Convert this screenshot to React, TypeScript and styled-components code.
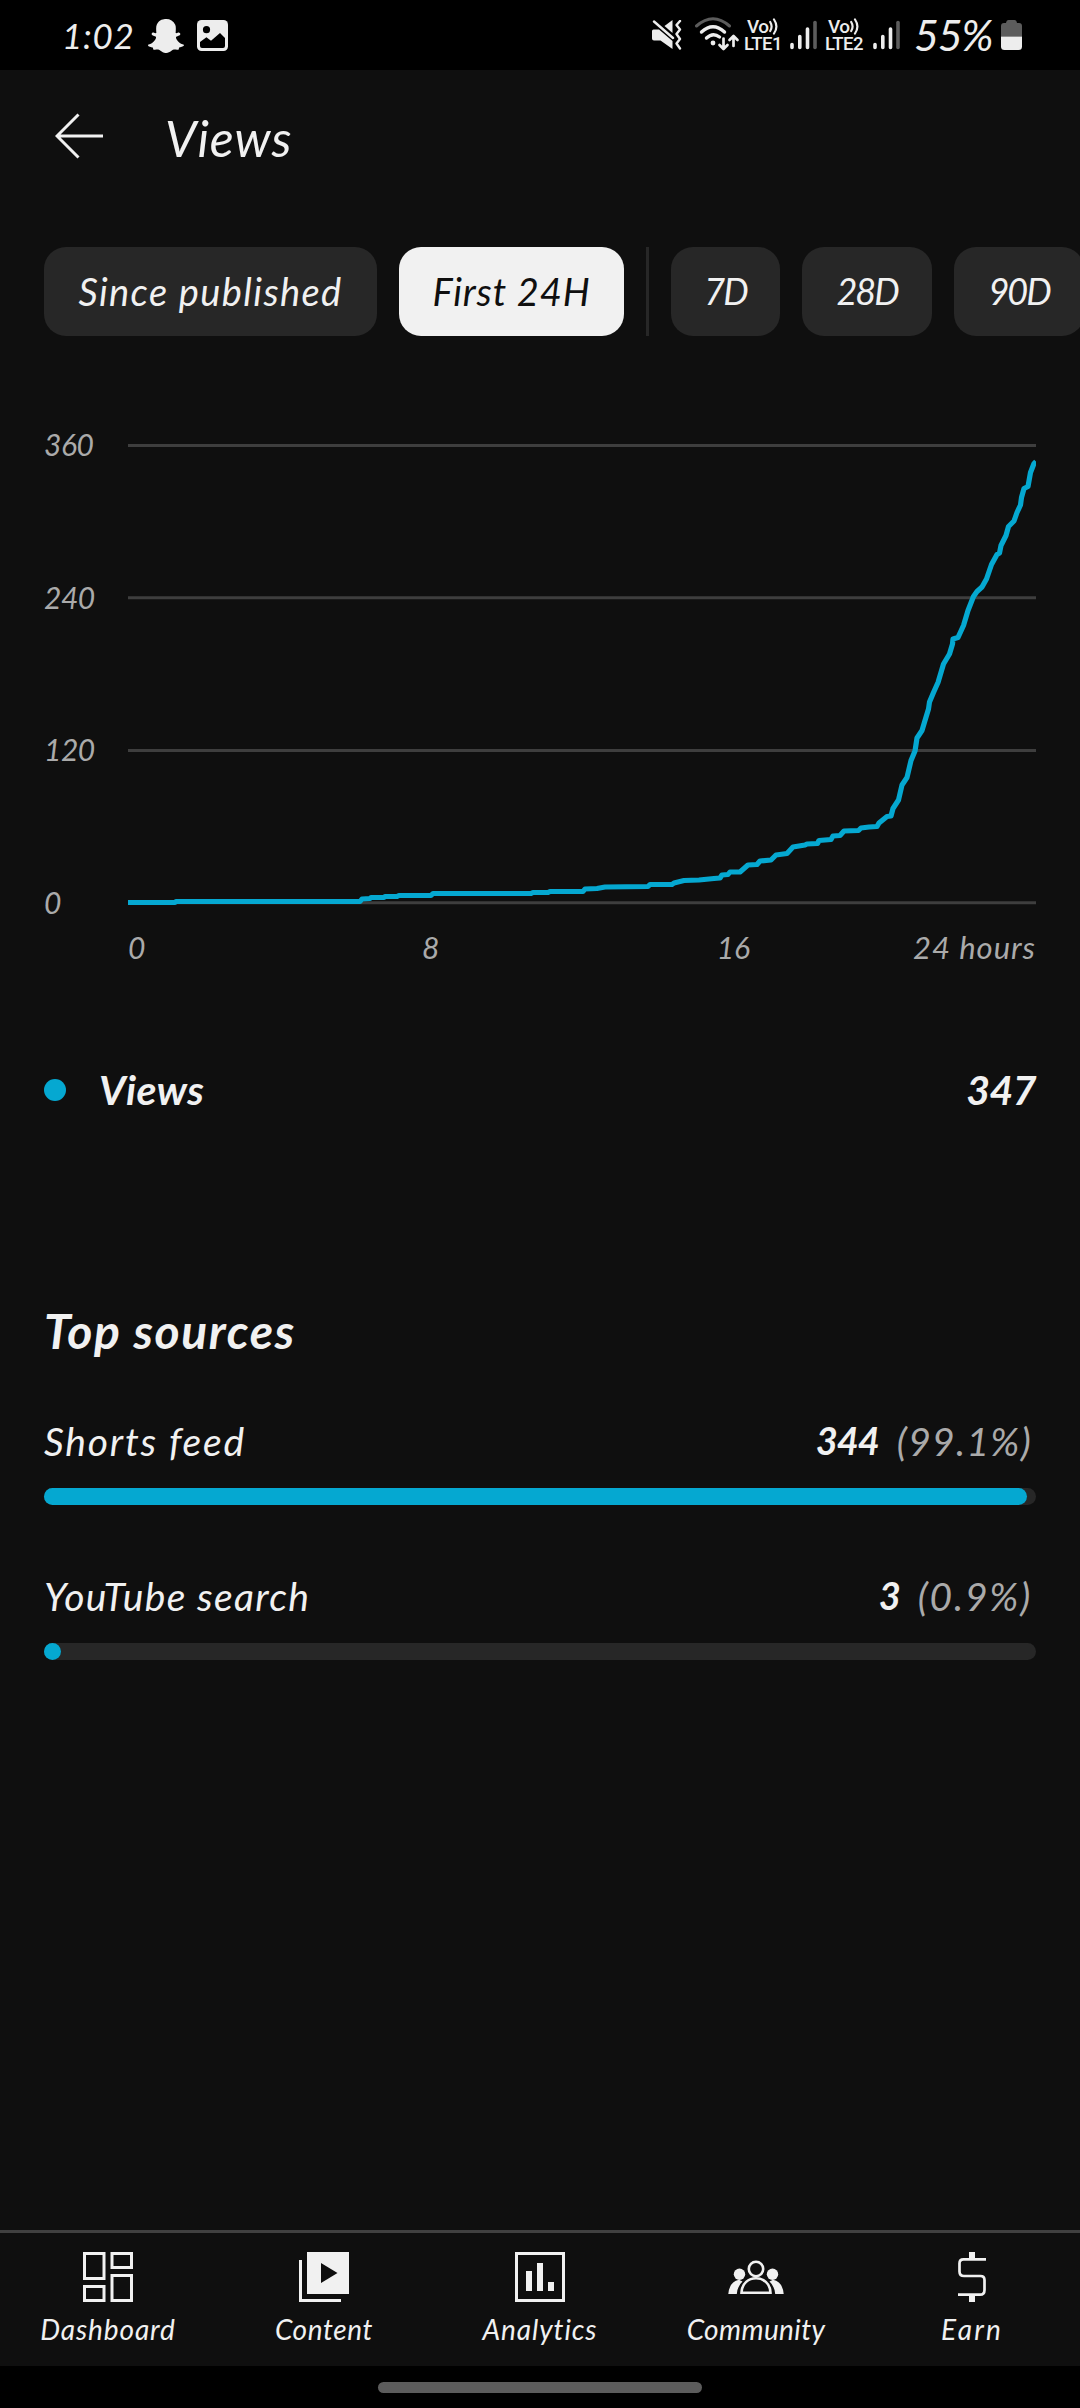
import React from "react";
import styled, { createGlobalStyle } from "styled-components";
import { FaSnapchatGhost } from "react-icons/fa";

const ink = "#f1f1f1";
const muted = "#aaaaaa";
const surface = "#0f0f0f";
const raised = "#272727";
const accent = "#05a8d1";

const GlobalStyle = createGlobalStyle`
  *, *::before, *::after { box-sizing: border-box; }
  body {
    margin: 0;
    background: #000;
    color: ${ink};
    font-family: Lato, "Open Sans", sans-serif;
    font-style: italic;
  }
  svg { display: block; flex: none; }
`;

const Screen = styled.div`
  width: 1080px;
  height: 2408px;
  display: flex;
  flex-direction: column;
  overflow: hidden;
  background: ${surface};
`;

/* Glyph run with its own size, tracking and tone. */
const Label = styled.span<{ $size: number; $track?: number; $weight?: number; $color?: string }>`
  font-size: ${(p) => p.$size}px;
  letter-spacing: ${(p) => p.$track ?? 0}px;
  font-weight: ${(p) => p.$weight ?? 400};
  color: ${(p) => p.$color ?? "inherit"};
  line-height: 1.2;
  white-space: nowrap;
`;

const StatusBar = styled.header`
  height: 70px;
  flex: none;
  display: flex;
  justify-content: space-between;
  background: #000;
  color: #ededed;
  padding: 0 58px 0 62px;
`;

const StatusGroup = styled.div`
  display: flex;
  align-items: center;
`;

const Clock = styled(Label)`
  width: 85px;
`;

const GhostIcon = styled(FaSnapchatGhost)`
  width: 38px;
  height: 36px;
  margin-top: 1px;
  margin-right: 12px;
`;

const Carrier = styled.div<{ $width: number }>`
  width: ${(p) => p.$width}px;
  display: flex;
  flex-direction: column;
  align-items: flex-start;
  font-family: Roboto, sans-serif;
  font-style: normal;
  font-weight: 500;
`;

const CarrierTop = styled.div`
  display: flex;
  align-items: center;
  gap: 1px;
  padding-left: 3px;
  height: 17px;
  font-size: 19px;
  line-height: 17px;
  letter-spacing: -0.6px;
`;

const CarrierBottom = styled.div`
  height: 17px;
  font-size: 18.5px;
  line-height: 18px;
  letter-spacing: -0.5px;
`;

const Battery = styled(Label)`
  width: 87px;
`;

const TopBar = styled.div`
  height: 131px;
  flex: none;
  display: flex;
  align-items: center;
  padding-left: 55px;
  gap: 61px;
`;

const Title = styled.h1`
  margin: 5px 0 0;
  font-size: 50px;
  font-weight: 400;
  line-height: 58px;
  letter-spacing: 0.9px;
`;

const Chips = styled.div`
  display: flex;
  flex: none;
  gap: 22px;
  margin-top: 46px;
  padding-left: 44px;
  height: 89px;
  overflow: hidden;
`;

const Chip = styled.button<{ $width: number; $size?: number; $active?: boolean; $track: number }>`
  flex: none;
  width: ${(p) => p.$width}px;
  border: 0;
  border-radius: 22px;
  padding: 0;
  font: italic 400 ${(p) => p.$size ?? 36}px/1.2 Lato, "Open Sans", sans-serif;
  letter-spacing: ${(p) => p.$track}px;
  color: ${(p) => (p.$active ? surface : ink)};
  background: ${(p) => (p.$active ? ink : raised)};
`;

const ChipDivider = styled.div`
  flex: none;
  width: 3px;
  background: ${raised};
`;

const Chart = styled.section`
  display: grid;
  grid-template-columns: 84px 908px;
  margin: 88px 44px 0;
`;

const YAxis = styled.div`
  height: 499px;
  display: flex;
  flex-direction: column;
  justify-content: space-between;
  color: ${muted};

  span { line-height: 41px; }
`;

const XAxis = styled.div`
  grid-column: 2;
  display: grid;
  grid-template-columns: 1fr 2fr 2fr 1fr;
  padding-top: 6px;
  height: 42px;
  text-align: center;
  color: ${muted};

  span:first-child { text-align: left; }
  span:last-child { text-align: right; }
`;

const Legend = styled.div`
  display: flex;
  align-items: center;
  margin: 95px 44px 0;
  height: 60px;
`;

const LegendDot = styled.i`
  width: 22px;
  height: 22px;
  border-radius: 50%;
  background: ${accent};
  margin-right: 33px;
`;

const LegendName = styled(Label)`
  flex: 1;
`;

const Sources = styled.section`
  margin: 183px 44px 0;
  display: flex;
  flex-direction: column;
`;

const SectionTitle = styled.h2`
  margin: 0 0 52px;
  font-size: 48px;
  line-height: 56px;
  font-weight: 700;
  letter-spacing: 1.6px;
`;

const Source = styled.div`
  height: 155px;
`;

const SourceHead = styled.div`
  display: flex;
  align-items: center;
  height: 60px;
  padding-right: 4px;
`;

const SourceName = styled(Label)`
  flex: 1;
`;

const SourceCount = styled(Label)`
  margin-right: 18px;
`;

const Track = styled.div`
  height: 17px;
  margin-top: 17px;
  border-radius: 9px;
  background: ${raised};
`;

const Fill = styled.div`
  height: 17px;
  min-width: 17px;
  border-radius: 9px;
  background: ${accent};
`;

const NavBar = styled.nav`
  margin-top: auto;
  flex: none;
  height: 136px;
  border-top: 3px solid #404040;
  display: grid;
  grid-template-columns: repeat(5, 1fr);
`;

const NavItem = styled.a`
  display: flex;
  flex-direction: column;
  align-items: center;
  padding-top: 19px;
  gap: 11px;
`;

const GestureArea = styled.footer`
  flex: none;
  height: 42px;
  padding-top: 16px;
  background: #000;
  display: flex;
  justify-content: center;
`;

const GesturePill = styled.div`
  width: 324px;
  height: 11px;
  border-radius: 6px;
  background: #5c5c5c;
`;

const Spacer = styled.div<{ $width: number }>`
  flex: none;
  width: ${(p) => p.$width}px;
`;

const GalleryIcon = () => (
  <svg width="31" height="31" viewBox="0 0 31 31">
    <rect width="31" height="31" rx="4.5" fill="#ededed" />
    <circle cx="9.5" cy="9.7" r="3.6" fill="#000" />
    <path d="M3 22 L9.4 17.2 L14 20.7 L23 13 L28 18 V26 Q28 28 26 28 H5 Q3 28 3 26Z" fill="#000" />
  </svg>
);

const MuteIcon = () => (
  <svg width="30" height="30" viewBox="0 0 30 30">
    <path d="M0 11 Q0 9.5 1.5 9.5 H7 L20.5 21 V29 L8.5 20.5 H2 Q0 20.5 0 18.5Z" fill="#ededed" />
    <path d="M12.5 6 L20.5 0 V13Z" fill="#ededed" />
    <path d="M2 1.5 L21 18" stroke="#ededed" strokeWidth="2.4" strokeLinecap="round" />
    <path d="M28 1 L24.5 5 L28 9.5 L24.5 14 L28 19 L24.5 23.5 L28 28.5" fill="none" stroke="#ededed" strokeWidth="2.4" strokeLinecap="round" strokeLinejoin="round" />
  </svg>
);

const WifiIcon = () => (
  <svg width="46" height="36" viewBox="0 0 46 36" fill="none" strokeLinecap="round">
    <path d="M2.5 9 Q19 -5.5 35.5 9" stroke="#5c5c5c" strokeWidth="3" />
    <path d="M7.5 15 Q19 4.5 30.5 15" stroke="#ededed" strokeWidth="3.4" />
    <path d="M12.5 21 Q19 15 25.5 20" stroke="#ededed" strokeWidth="3.4" />
    <circle cx="19" cy="26" r="2.4" fill="#ededed" />
    <path d="M29.5 21.5 V31.5 M25.5 28 L29.5 32 L33.5 28 M39.5 29 V19.5 M35.5 23 L39.5 19 L43.5 23" stroke="#ededed" strokeWidth="2.7" strokeLinejoin="round" />
  </svg>
);

const Waves = () => (
  <svg width="9" height="17" viewBox="0 0 9 17" fill="none" stroke="#ededed" strokeWidth="2.2" strokeLinecap="round">
    <path d="M1.2 4 Q4 8.5 1.2 13 M5 1.5 Q9.8 8.5 5 15.5" />
  </svg>
);

const SignalIcon = () => (
  <svg width="27" height="30" viewBox="0 0 27 30" strokeWidth="3.6" strokeLinecap="round" stroke="#ededed">
    <path d="M2 24.5 V27.5 M9.8 16.5 V27.5 M17.5 9 V27.5" />
    <path d="M25 2.5 V27.5" stroke="#5c5c5c" />
  </svg>
);

const BatteryIcon = () => (
  <svg width="21" height="30" viewBox="0 0 21 30">
    <path d="M0 16.5 V6 Q0 3 3 3 H5 Q5.5 0 7.5 0 H13.5 Q15.5 0 16 3 H18 Q21 3 21 6 V16.5Z" fill="#5c5c5c" />
    <path d="M0 16.5 H21 V26.5 Q21 30 17.5 30 H3.5 Q0 30 0 26.5Z" fill="#ededed" />
  </svg>
);

const BackIcon = () => (
  <svg width="49" height="46" viewBox="0 0 49 46" fill="none" stroke={ink} strokeWidth="3">
    <path d="M23.5 1.5 L2 23 L23.5 44.5 M2 23 H48" />
  </svg>
);

const navIcons: Record<string, React.ReactNode> = {
  Dashboard: (
    <g fill="none" stroke={ink} strokeWidth="3">
      <rect x="4.5" y="1.5" width="19.5" height="25" />
      <rect x="32" y="1.5" width="19.5" height="14" />
      <rect x="4.5" y="34.5" width="19.5" height="14" />
      <rect x="32" y="23.5" width="19.5" height="25" />
    </g>
  ),
  Content: (
    <g>
      <path fill={ink} fillRule="evenodd" d="M11 0 H53 V42 H11Z M25 11 V31 L41.5 21Z" />
      <path fill="none" stroke={ink} strokeWidth="3" d="M4.5 8 V48.5 H45" />
    </g>
  ),
  Analytics: (
    <g>
      <rect x="4.5" y="1.5" width="47" height="47" fill="none" stroke={ink} strokeWidth="3" />
      <path fill={ink} d="M14 19 H20 V39 H14Z M25 11 H31 V39 H25Z M36 30 H42 V39 H36Z" />
    </g>
  ),
  Community: (
    <g>
      <circle cx="28" cy="17" r="7.2" fill="none" stroke={ink} strokeWidth="2.6" />
      <path d="M13.5 40.7 C14 21.5 42 21.5 42.5 40.7Z" fill="none" stroke={ink} strokeWidth="2.6" />
      <circle cx="11.5" cy="22.2" r="5.7" fill={ink} />
      <circle cx="44.5" cy="22.2" r="5.7" fill={ink} />
      <path d="M0.3 42 Q1.5 29.5 11 27.8 L14.5 29.5 Q9.5 34 8.8 42Z M55.7 42 Q54.5 29.5 45 27.8 L41.5 29.5 Q46.5 34 47.2 42Z" fill={ink} />
    </g>
  ),
  Earn: (
    <g>
      <path d="M42 7.3 H19.5 Q15.5 7.3 15.5 11.3 V19.5 Q15.5 24 20 24 H36.5 Q40.5 24 40.5 28 V38 Q40.5 42.7 36 42.7 H14" fill="none" stroke={ink} strokeWidth="2.7" />
      <path d="M25 0 H31 V6.5 H25Z M25 43.5 H31 V50 H25Z" fill={ink} />
    </g>
  ),
};

const navItems = [
  { name: "Dashboard", track: 0.9 },
  { name: "Content", track: 0.6 },
  { name: "Analytics", track: 0.9 },
  { name: "Community", track: 0.4 },
  { name: "Earn", track: 2.2 },
];

const chips = [
  { text: "Since published", width: 333, track: 1.4, size: 38 },
  { text: "First 24H", width: 225, track: 0.9, size: 38, active: true },
  { text: "7D", width: 109, track: -2 },
  { text: "28D", width: 130, track: -2 },
  { text: "90D", width: 130, track: -2 },
];

const sources = [
  { name: "Shorts feed", count: "344", share: "(99.1%)", percent: 99.1, track: 1.8, shareTrack: 1.3 },
  { name: "YouTube search", count: "3", share: "(0.9%)", percent: 0.9, track: 1.3, shareTrack: 1.8 },
];

/* Cumulative views; plot space is 908 wide, y 7 = 360 views, y 464.5 = 0 views. */
const curve =
  "0,464.5 47,464.5 48,463.5 232,463.5 234,461 242,460.5 243,459.5 256,459.5 257,458.5 269,458.5 271,457.5 303,457.5 305,455.5 403,455.5 405,454.5 420,454.5 422,453.5 455,453.5 457,451 469,450.5 477,449 520,448.5 522,446.5 544,446.5 546,445 556,442.5 571,442 586,440.5 592,440 594,437 600,436.5 602,434 612,434 620,427 629,426.5 632,423 643,422 648,417 659,415.5 665,409 677,407 679,406 689.5,405.5 691,402.5 703,401.5 705,398 712,397.5 716,393 730.5,392.5 733,390 741,389 749,388.5 751,385 759,378.5 763,378 765,370.5 770.5,362 774,347 779,339.5 783,322.5 787,313 789,300 794,292.5 797,282.5 800.5,271 801.5,264 805.5,254.5 810,244.5 815.5,226 821.5,216 824.5,206 825,201 830,199.5 835.5,187.5 840,172.5 845.5,158.5 849,153.5 854,149 858.5,141 863.5,126.5 869,116.5 871.5,115 873,107.5 878,97.5 880.5,88.5 886,83 889,74.5 892.5,67 893.5,59.5 896,50.5 900,48.5 902.5,34.5 906,25.5 908,23.5";

const yTicks = [7, 159.3, 312, 464.3];

export default function App() {
  return (
    <>
      <GlobalStyle />
      <Screen>
        <StatusBar>
          <StatusGroup>
            <Clock $size={35} $track={0.7}>1:02</Clock>
            <GhostIcon />
            <GalleryIcon />
          </StatusGroup>
          <StatusGroup>
            <MuteIcon />
            <Spacer $width={12} />
            <WifiIcon />
            <Spacer $width={4} />
            {["LTE1", "LTE2"].map((line) => (
              <React.Fragment key={line}>
                <Carrier $width={line === "LTE1" ? 46 : 48}>
                  <CarrierTop>Vo<Waves /></CarrierTop>
                  <CarrierBottom>{line}</CarrierBottom>
                </Carrier>
                <SignalIcon />
                <Spacer $width={line === "LTE1" ? 8 : 14} />
              </React.Fragment>
            ))}
            <Battery $size={43} $track={-1.2}>55%</Battery>
            <BatteryIcon />
          </StatusGroup>
        </StatusBar>

        <TopBar>
          <BackIcon />
          <Title>Views</Title>
        </TopBar>

        <Chips>
          {chips.map((chip, i) => (
            <React.Fragment key={chip.text}>
              {i === 2 && <ChipDivider />}
              <Chip $width={chip.width} $size={chip.size} $track={chip.track} $active={chip.active}>
                {chip.text}
              </Chip>
            </React.Fragment>
          ))}
        </Chips>

        <Chart>
          <YAxis>
            {["360", "240", "120", "0"].map((v) => (
              <Label key={v} $size={30} $track={-0.5}>{v}</Label>
            ))}
          </YAxis>
          <svg width="908" height="499" viewBox="0 -14 908 499">
            {yTicks.map((y) => (
              <line key={y} x1="0" x2="908" y1={y + 0.5} y2={y + 0.5} stroke="#3e3e3e" strokeWidth="3" />
            ))}
            <polyline points={curve} fill="none" stroke={accent} strokeWidth="5.2" strokeLinejoin="round" />
          </svg>
          <XAxis>
            <Label $size={30}>0</Label>
            <Label $size={30}>8</Label>
            <Label $size={30}>16</Label>
            <Label $size={31} $track={1}>24 hours</Label>
          </XAxis>
        </Chart>

        <Legend>
          <LegendDot />
          <LegendName $size={41} $weight={700} $track={0.4}>Views</LegendName>
          <Label $size={41} $weight={700} $track={-0.5}>347</Label>
        </Legend>

        <Sources>
          <SectionTitle>Top sources</SectionTitle>
          {sources.map((s) => (
            <Source key={s.name}>
              <SourceHead>
                <SourceName $size={39} $track={s.track}>{s.name}</SourceName>
                <SourceCount $size={38} $weight={700} $track={-1}>{s.count}</SourceCount>
                <Label $size={39} $track={s.shareTrack} $color={muted}>{s.share}</Label>
              </SourceHead>
              <Track>
                <Fill style={{ width: `${s.percent}%` }} />
              </Track>
            </Source>
          ))}
        </Sources>

        <NavBar>
          {navItems.map((item) => (
            <NavItem key={item.name}>
              <svg width="56" height="50" viewBox="0 0 56 50">{navIcons[item.name]}</svg>
              <Label $size={28} $track={item.track}>{item.name}</Label>
            </NavItem>
          ))}
        </NavBar>
        <GestureArea>
          <GesturePill />
        </GestureArea>
      </Screen>
    </>
  );
}
